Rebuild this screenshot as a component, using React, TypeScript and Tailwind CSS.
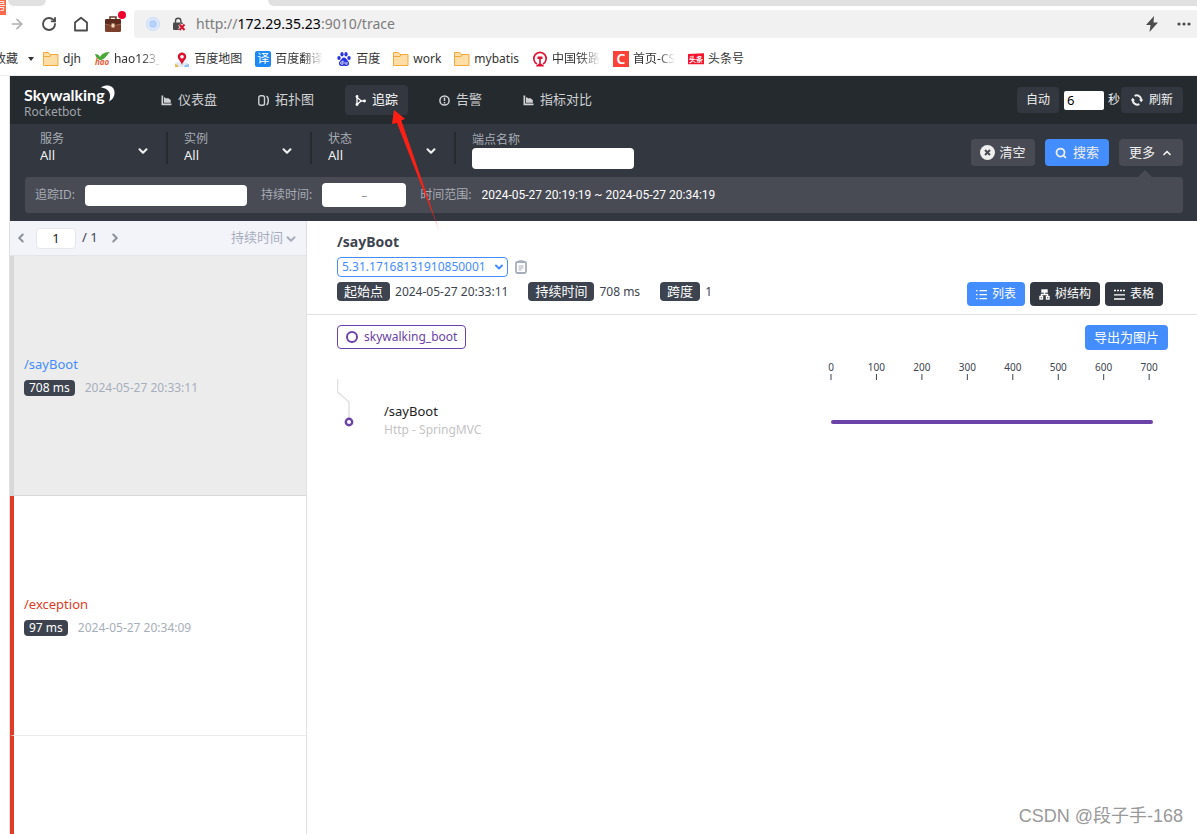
import type { ReactNode } from 'react';
import { ArrowRight, ChevronDown, ChevronLeft, ChevronRight, ChevronUp, RotateCw, Search } from 'lucide-react';

interface Trace {
  endpoint: string;
  duration: string;
  start: string;
  isError: boolean;
}

const traces: Trace[] = [
  { endpoint: '/sayBoot', duration: '708 ms', start: '2024-05-27 20:33:11', isError: false },
  { endpoint: '/exception', duration: '97 ms', start: '2024-05-27 20:34:09', isError: true },
];

const ticks = [0, 100, 200, 300, 400, 500, 600, 700];

/* ---------- Icons ---------- */

const FolderIcon = () => (
  <svg viewBox="0 0 16 16" className="size-4 shrink-0">
    <path d="M.5 14.500V1.500h5l1.500 2h8v11z" fill="#ffdda6" stroke="#f5a83c" />
    <path d="M1 5.500h6l1-2" fill="none" stroke="#f5a83c" />
  </svg>
);

const HaoIcon = () => (
  <svg viewBox="0 0 16 16" className="size-4 shrink-0">
    <path d="M1 3c3 0 4 1 5 3 2-4 6-5 10-5-3 2-3 6-9 8C4 9 2 7 1 3z" fill="#4aa83a" />
    <text x="1" y="14" fontSize="8" fontWeight="700" fontStyle="italic" fill="#e8603c">hao</text>
  </svg>
);

const MapPinIcon = () => (
  <svg viewBox="0 0 16 16" className="size-4 shrink-0">
    <path d="M1 12l4-1 3 2 4-2 3 2v3H1z" fill="#dfeaf5" />
    <path d="M1 13l3 1v2H1z" fill="#f0b44c" />
    <path d="M11 14l4-1v3h-5z" fill="#8fc3f2" />
    <path d="M8 1.500a4.200 4.200 0 0 1 4.200 4.200C12.200 8.500 9 10 8 14 7 10 3.800 8.500 3.800 5.700A4.200 4.200 0 0 1 8 1.500z" fill="#e2102f" />
    <circle cx="8" cy="5.700" r="1.800" fill="#fff" />
  </svg>
);

const TranslateIcon = () => (
  <span className="flex size-4 shrink-0 items-center justify-center rounded-xs bg-[#1e88f5] text-xs leading-4 text-white">译</span>
);

const PawIcon = () => (
  <svg viewBox="0 0 16 16" className="size-4 shrink-0" fill="#2932e1">
    <ellipse cx="3" cy="7" rx="1.700" ry="2.100" />
    <ellipse cx="6" cy="3.200" rx="1.600" ry="2.200" />
    <ellipse cx="10" cy="3.200" rx="1.600" ry="2.200" />
    <ellipse cx="13" cy="7" rx="1.700" ry="2.100" />
    <path d="M8 6.500c2 0 2.500 2 4 3.500 2 2 1 5-1.500 5-1 0-1.500-.300-2.500-.300s-1.500.300-2.500.300C3 15 2 12 4 10c1.500-1.500 2-3.500 4-3.500z" />
    <path d="M7 9.500v3.700H5.800a1.200 1.200 0 0 1 0-2.400H7M9 10.800v1.600q0 .800.900.800h1.100v-2.400" fill="none" stroke="#fff" strokeWidth=".8" />
  </svg>
);

const RailwayIcon = () => (
  <svg viewBox="0 0 16 16" className="size-4 shrink-0">
    <path d="M5 13A6.200 6.200 0 1 1 11 13" fill="none" stroke="#e0102f" strokeWidth="1.600" />
    <path d="M5.500 5.500h5v2.500H8.800v4.500l3 2v1H4.200v-1l3-2V8H5.500z" fill="#e0102f" />
  </svg>
);

const CsdnIcon = () => (
  <span className="flex size-4 shrink-0 items-center justify-center bg-[#fc4237] text-sm leading-4 font-semibold text-white">C</span>
);

const ToutiaoIcon = () => (
  <svg viewBox="0 0 16 16" className="size-4 shrink-0">
    <path d="M0 3l16-.700v11L0 13.300z" fill="#f5142d" />
    <text x="1" y="11" fontSize="7" fontWeight="700" fill="#fff">头条</text>
  </svg>
);

const BriefcaseIcon = () => (
  <svg viewBox="0 0 18 18" className="size-[18px]">
    <path d="M6 4V2h6v2" fill="none" stroke="#6e3524" strokeWidth="1.500" />
    <rect x="1" y="4" width="16" height="13" rx="1.500" fill="#7b3f2b" />
    <path d="M1 5.500Q1 4 2.500 4h13Q17 4 17 5.500V9l-8 2-8-2z" fill="#5d2a1d" />
    <path d="M1 9l8 2 8-2" fill="none" stroke="#b9795a" strokeWidth=".7" />
    <rect x="7.500" y="8.500" width="3" height="4" fill="#f0d9b8" />
  </svg>
);

const InsecureIcon = () => (
  <svg viewBox="0 0 14 14" className="size-3.5">
    <path d="M3.500 6V4a2.700 2.700 0 0 1 5.400 0v2" fill="none" stroke="#4a4a4a" strokeWidth="1.400" />
    <rect x="1" y="5.500" width="10" height="7.500" rx="1" fill="#4a4a4a" />
    <path d="M7.500 7.500l5 5.500M12.500 7.500l-5 5.500" stroke="#f1f1f1" strokeWidth="3.500" />
    <path d="M7.500 7.500l5 5.500M12.500 7.500l-5 5.500" stroke="#d9112c" strokeWidth="1.900" />
  </svg>
);

const ChartIcon = () => (
  <svg viewBox="0 0 11 11" className="size-[11px] shrink-0" fill="currentColor">
    <path d="M.5 .5h1.700v8H10.500v1.700H.5z" />
    <path d="M3 2l2.500 1.500 1.500-.5L9.800 5V7.700H3z" />
  </svg>
);

const TopologyIcon = () => (
  <svg viewBox="0 0 11 11" className="size-[11px] shrink-0" fill="none" stroke="currentColor" strokeWidth="1.400">
    <rect x=".8" y=".8" width="5.700" height="9.400" rx="1.800" />
    <path d="M8.500 1.200c1.600.800 1.800 2 1.800 4.300s-.200 3.500-1.800 4.300" />
  </svg>
);

const TraceIcon = () => (
  <svg viewBox="0 0 11 11" className="size-[11px] shrink-0" fill="none" stroke="currentColor" strokeWidth="1.300">
    <path d="M2 1.500v8M2 2.500l4.500 3.500h2.500M2 9.500l4-3.500" />
    <circle cx="2" cy="1.500" r=".8" fill="currentColor" />
    <circle cx="2" cy="9.500" r=".8" fill="currentColor" />
    <circle cx="9.500" cy="6" r=".8" fill="currentColor" />
  </svg>
);

const AlarmIcon = () => (
  <svg viewBox="0 0 11 11" className="size-[11px] shrink-0" fill="none" stroke="currentColor" strokeWidth="1.500">
    <circle cx="5.500" cy="5.500" r="4.600" />
    <path d="M5.500 2.500v3.500M5.500 7v1.400" />
  </svg>
);

const RefreshIcon = () => (
  <svg viewBox="0 0 12 12" className="size-3 shrink-0" fill="none" stroke="currentColor" strokeWidth="2">
    <path d="M3.600 1.900A4.600 4.600 0 0 1 10.300 6M8.400 10.100A4.600 4.600 0 0 1 1.700 6" />
    <path d="M8 5.500h4.400L10.200 8.300zM-.4 6.500H4L1.800 3.700z" fill="currentColor" stroke="none" />
  </svg>
);

const ClearIcon = () => (
  <svg viewBox="0 0 14 14" className="size-[15px] shrink-0">
    <circle cx="7" cy="7" r="7" fill="#efefef" />
    <path d="M4.700 4.700l4.600 4.600M9.300 4.700L4.700 9.300" stroke="#494b54" strokeWidth="1.900" />
  </svg>
);

const ListIcon = () => (
  <svg viewBox="0 0 11 11" className="size-[11px] shrink-0" stroke="currentColor" strokeWidth="1.200">
    <path d="M0 1.600h1.500M0 5.600h1.500M0 9.600h1.500M3.500 1.600H11M3.500 5.600H11M3.500 9.600H11" />
  </svg>
);

const TreeIcon = () => (
  <svg viewBox="0 0 11 11" className="size-[11px] shrink-0" fill="none" stroke="currentColor" strokeWidth="1.400">
    <rect x="3" y="1" width="5" height="2" fill="currentColor" />
    <path d="M5.500 3v2.500M2.500 7.500v-2h6v2" />
    <rect x="1" y="7.500" width="2.500" height="2.500" />
    <rect x="7.500" y="7.500" width="2.500" height="2.500" />
  </svg>
);

const TableIcon = () => (
  <svg viewBox="0 0 11 11" className="size-[11px] shrink-0" stroke="currentColor" strokeWidth="1.300">
    <path d="M0 1.500h11" strokeDasharray="2 1" />
    <path d="M0 5.800h11M0 10h11" />
  </svg>
);

const ClipboardIcon = () => (
  <svg viewBox="0 0 12 14" className="h-3.5 w-3" fill="none" stroke="#a7aebb">
    <rect x="1" y="2" width="10" height="11" rx="1.500" strokeWidth="1.800" />
    <path d="M3.500 1.500h5" strokeWidth="2.500" />
    <path d="M3.500 6h5M3.500 8h5M3.500 10h3" />
  </svg>
);

/* ---------- Browser chrome ---------- */

const bookmarks: { label: string; icon: ReactNode; faded?: boolean }[] = [
  { label: 'djh', icon: <FolderIcon /> },
  { label: 'hao123_', icon: <HaoIcon />, faded: true },
  { label: '百度地图', icon: <MapPinIcon /> },
  { label: '百度翻译', icon: <TranslateIcon />, faded: true },
  { label: '百度', icon: <PawIcon /> },
  { label: 'work', icon: <FolderIcon /> },
  { label: 'mybatis', icon: <FolderIcon /> },
  { label: '中国铁路', icon: <RailwayIcon />, faded: true },
  { label: '首页-CS', icon: <CsdnIcon />, faded: true },
  { label: '头条号', icon: <ToutiaoIcon /> },
];

function BrowserBar() {
  return (
    <div className="shrink-0 border-b border-[#ececec] bg-white">
      {/* Tab strip */}
      <div className="relative flex h-1.5 pl-2">
        <div className="w-[38px] rounded-b-md bg-[#e1e1e1]" />
        <div className="ml-[222px] flex-1 rounded-bl-md bg-[#e1e1e1]" />
        <span className="absolute top-0 left-0 flex h-[15px] w-1.5 justify-end overflow-hidden bg-[#f9694d] text-[10px] leading-3 text-white">号</span>
      </div>

      {/* Toolbar */}
      <div className="mt-1 flex h-7 items-center gap-4 pl-[9px] text-[#4c4c4c]">
        <button aria-label="前进"><ArrowRight className="size-4 text-[#b0b0b0]" strokeWidth={2.500} /></button>
        <button aria-label="重新加载"><RotateCw className="size-4" strokeWidth={2.800} /></button>
        <button aria-label="主页">
          <svg viewBox="0 0 16 16" className="size-4" fill="none" stroke="currentColor" strokeWidth="1.800">
            <path d="M2 14.500V6.500L8 1.800l6 4.700v8z" strokeLinejoin="round" />
          </svg>
        </button>
        <button aria-label="工具箱" className="relative -ml-px">
          <BriefcaseIcon />
          <span className="absolute -top-1 -right-1 size-2 rounded-full bg-[#f0002d]" />
        </button>
        <div className="-ml-1 flex h-7 flex-1 items-center rounded-l bg-[#f1f1f1] pr-1.5 pl-3">
          <span className="size-3.5 rounded-full border border-[#cfe0fb] bg-[#b5d1fb] ring-2 ring-[#e3edfb] ring-inset" />
          <span className="ml-3"><InsecureIcon /></span>
          <div role="textbox" aria-label="地址" className="ml-2.5 flex-1 text-sm leading-5 text-[#7c7c7c]">
            http://<span className="text-black">172.29.35.23</span>:9010/trace
          </div>
          <button aria-label="极速模式">
            <svg viewBox="0 0 14 16" className="h-4 w-3.5"><path d="M9 0L1 9h4.500L4.500 16 13 6.500H8.500z" fill="#4c4c4c" /></svg>
          </button>
          <button aria-label="更多" className="ml-[18px]">
            <svg viewBox="0 0 14 4" className="h-1 w-3.5" fill="#4c4c4c">
              <circle cx="2" cy="2" r="1.600" />
              <circle cx="7" cy="2" r="1.600" />
              <circle cx="12" cy="2" r="1.600" />
            </svg>
          </button>
        </div>
      </div>

      {/* Bookmarks */}
      <div className="flex h-[37px] items-center gap-[9px] pt-1 text-xs text-[#333]">
        <button className="flex items-center gap-2.5">
          <span className="flex w-[18px] justify-end overflow-hidden whitespace-nowrap">收藏</span>
          <svg viewBox="0 0 6 4" className="h-1 w-1.5"><path d="M0 0h6L3 4z" fill="#333" /></svg>
        </button>
        <div className="flex items-center gap-[13px]">
          {bookmarks.map((b) => (
            <a key={b.label} href="#" className="flex items-center gap-1 whitespace-nowrap">
              {b.icon}
              <span className={b.faded ? 'mask-r-from-60% mask-r-to-100%' : ''}>{b.label}</span>
            </a>
          ))}
        </div>
      </div>
    </div>
  );
}

/* ---------- Rocketbot header ---------- */

const navItems = [
  { label: '仪表盘', icon: <ChartIcon /> },
  { label: '拓扑图', icon: <TopologyIcon /> },
  { label: '追踪', icon: <TraceIcon />, active: true },
  { label: '告警', icon: <AlarmIcon /> },
  { label: '指标对比', icon: <ChartIcon /> },
];

function Header() {
  return (
    <header className="flex h-12 items-center bg-[#252a2f] px-3.5 text-xs text-[#efefef]">
      <div className="w-[127px] pt-1">
        <div className="flex text-white">
          <span className="font-['Lato',sans-serif] text-base leading-5 font-bold">Skywalking</span>
          <svg viewBox="0 0 14 17" className="-ml-1 h-[17px] w-3.5">
            <path d="M0 2.500C6-1.500 14 1 13.500 8c0 4-2.500 7-5.500 8.500C10.500 10 9 3.500 0 2.500z" fill="#fff" />
          </svg>
        </div>
        <div className="text-xs leading-3.5 text-[#a0a5ab]">Rocketbot</div>
      </div>
      <nav className="flex gap-[21px]">
        {navItems.map((item) => (
          <a
            key={item.label}
            href="#"
            className={`flex h-[30px] items-center gap-1.5 rounded px-2.5 text-[13px] ${
              item.active ? 'bg-[#333840] text-white' : 'text-[#cfd1d3]'
            }`}
          >
            {item.icon}
            {item.label}
          </a>
        ))}
      </nav>
      <div className="ml-auto flex items-center">
        <button className="h-[26px] rounded bg-[#333840] px-[9px]">自动</button>
        <label className="ml-[5px] flex items-center gap-1">
          <input defaultValue="6" aria-label="刷新间隔" className="h-[19px] w-10 rounded-xs bg-white px-[3px] text-[13px] text-black" />
          秒
        </label>
        <button className="ml-px flex h-[26px] items-center gap-1.5 rounded bg-[#333840] px-2.5">
          <RefreshIcon />
          刷新
        </button>
      </div>
    </header>
  );
}

function FilterSelect({ id, label }: { id: string; label: string }) {
  return (
    <div className="relative h-8 w-36 border-r-2 border-[#252a2f] pl-4">
      <label htmlFor={id} className="block text-xs leading-3.5 text-[#a7acb5]">{label}</label>
      <select id={id} className="block w-full appearance-none bg-transparent text-[13px] leading-[18px] text-[#efefef]">
        <option>All</option>
      </select>
      <ChevronDown className="pointer-events-none absolute top-3 right-4 size-3.5 text-[#efefef]" strokeWidth={3.500} />
    </div>
  );
}

function Filters() {
  return (
    <section className="bg-[#333840] px-3.5 pb-2 text-xs text-[#a7acb5]">
      <div className="flex h-[53px] items-start pt-2">
        <FilterSelect id="service" label="服务" />
        <FilterSelect id="instance" label="实例" />
        <FilterSelect id="status" label="状态" />
        <div className="pl-4">
          <label htmlFor="endpoint" className="block leading-4">端点名称</label>
          <input id="endpoint" className="block h-[21px] w-[162px] rounded-sm bg-white px-1 text-black" />
        </div>
        <div className="mt-[7px] ml-auto flex gap-2.5 text-[13px] text-[#efefef]">
          <button className="flex h-[27px] w-16 items-center justify-center gap-1 rounded bg-[#494b54]">
            <ClearIcon />
            清空
          </button>
          <button className="flex h-[27px] w-16 items-center justify-center gap-1.5 rounded bg-[#448dfe]">
            <Search className="size-3" strokeWidth={3.500} />
            搜索
          </button>
          <button className="relative flex h-[27px] w-16 items-center justify-center gap-1.5 rounded bg-[#494b54]">
            更多
            <ChevronUp className="size-3" strokeWidth={3.500} />
            <svg viewBox="0 0 16 8" className="absolute top-[31px] left-[18px] h-2 w-4"><path d="M0 8l8-8 8 8z" fill="#494b54" /></svg>
          </button>
        </div>
      </div>
      <div className="ml-px flex h-9 items-center gap-2.5 rounded bg-[#494b54] pl-2.5">
        <label htmlFor="trace-id">追踪ID:</label>
        <input id="trace-id" className="h-[21px] w-[162px] rounded-sm bg-white px-1 text-black" />
        <label htmlFor="duration" className="ml-1">持续时间:</label>
        <input id="duration" placeholder="–" className="h-6 w-[84px] rounded-sm bg-white text-center placeholder:text-[#999]" />
        <span className="ml-1">时间范围:</span>
        <span className="font-['Roboto','Noto_Sans_CJK_SC',sans-serif] text-white">2024-05-27 20:19:19 ~ 2024-05-27 20:34:19</span>
      </div>
    </section>
  );
}

/* ---------- Trace list ---------- */

function TraceList() {
  return (
    <aside className="w-[297px] shrink-0 overflow-hidden border-r border-[#e1e1e1]">
      <div className="flex h-[35px] items-center border-b border-[#e3e4e8] bg-[#f3f3fa] pr-2 pl-1 text-[13px] text-[#a7aebb]">
        <button aria-label="上一页"><ChevronLeft className="size-3.5 text-[#8d939c]" strokeWidth={3.500} /></button>
        <input aria-label="页码" defaultValue="1" className="ml-2 h-[21px] w-10 rounded-sm border border-[#e6e6ee] bg-white text-center text-[#222]" />
        <span className="ml-1.5 text-[#3d444f]">/ 1</span>
        <button aria-label="下一页" className="ml-2.5"><ChevronRight className="size-3.5 text-[#8d939c]" strokeWidth={3.500} /></button>
        <label className="relative ml-auto">
          <select aria-label="排序" className="w-[67px] appearance-none bg-transparent">
            <option>持续时间</option>
          </select>
          <ChevronDown className="pointer-events-none absolute top-1 right-0 size-3.5" strokeWidth={3.500} />
        </label>
      </div>
      {traces.map((t) => (
        <a
          key={t.endpoint}
          href="#"
          className={`flex h-60 flex-col justify-center border-b border-l-4 pb-0.5 pl-2.5 ${
            t.isError ? 'border-b-[#ececec] border-l-[#e03b26]' : 'border-b-[#d8d8d8] border-l-[#d8d8d8] bg-[#ececec]'
          }`}
        >
          <span className={`text-[13px] leading-5 ${t.isError ? 'text-[#e03b26]' : 'text-[#448dfe]'}`}>{t.endpoint}</span>
          <span className="mt-1.5 flex items-center gap-2.5 text-xs leading-4">
            <span className="rounded bg-[#3d444f] px-[5px] text-white">{t.duration}</span>
            <span className="text-[#a7aebb]">{t.start}</span>
          </span>
        </a>
      ))}
      <div className="h-60 border-l-4 border-[#e03b26]" />
    </aside>
  );
}

/* ---------- Trace detail ---------- */

function InfoItem({ label, value }: { label: string; value: string }) {
  return (
    <div className="flex items-center gap-[5px]">
      <span className="h-[19px] rounded bg-[#3d444f] px-[7px] text-[13px] leading-[19px] text-white">{label}</span>
      <span>{value}</span>
    </div>
  );
}

function TraceDetail() {
  return (
    <main className="min-w-0 flex-1 text-xs text-[#3d444f]">
      <div className="border-b border-[#e1e1e1] pt-[11px] pr-[34px] pb-2 pl-[30px]">
        <h1 className="text-sm leading-5 font-bold">/sayBoot</h1>
        <div className="mt-[5px] flex items-center gap-[7px]">
          <div className="relative text-[#448dfe]">
            <select aria-label="追踪ID" className="block h-5 w-[171px] appearance-none rounded-sm border border-[#448dfe] bg-white pl-1 leading-4">
              <option>5.31.17168131910850001</option>
            </select>
            <ChevronDown className="pointer-events-none absolute top-1 right-[3px] size-3" strokeWidth={4} />
          </div>
          <button aria-label="复制"><ClipboardIcon /></button>
        </div>
        <div className="mt-[5px] flex items-start justify-between">
          <div className="flex gap-5">
            <InfoItem label="起始点" value="2024-05-27 20:33:11" />
            <InfoItem label="持续时间" value="708 ms" />
            <InfoItem label="跨度" value="1" />
          </div>
          <div className="flex gap-[5px] text-white">
            <button className="flex h-6 items-center gap-[5px] rounded-sm bg-[#448dfe] px-[9px]"><ListIcon />列表</button>
            <button className="flex h-6 items-center gap-[5px] rounded-sm bg-[#333840] px-[9px]"><TreeIcon />树结构</button>
            <button className="flex h-6 items-center gap-[5px] rounded-sm bg-[#333840] px-[9px]"><TableIcon />表格</button>
          </div>
        </div>
      </div>

      <div className="pt-2.5 pr-[29px] pl-[30px]">
        <div className="flex items-start justify-between">
          <span className="flex h-6 items-center gap-1.5 rounded-sm border border-[#6b42a8] px-2 text-[#6b42a8]">
            <span className="size-3 rounded-full border-2 border-[#6b42a8]" />
            skywalking_boot
          </span>
          <button className="h-[25px] rounded-sm bg-[#448dfe] px-[9px] text-[13px] text-white">导出为图片</button>
        </div>

        <div className="mt-1.5 flex justify-between">
          <div className="flex pt-[23px]">
            <svg viewBox="0 0 20 60" className="h-[60px] w-5" fill="none">
              <path d="M.5 0v13L12 23v16" stroke="#e1e1e1" strokeWidth="1.500" />
              <circle cx="12" cy="43" r="3.200" stroke="#6b42a8" strokeWidth="2.400" />
            </svg>
            <div className="pt-[22px] pl-[27px]">
              <div className="text-[13px] leading-5 text-[#222]">/sayBoot</div>
              <div className="text-xs leading-[18px] text-[#c4c4c4]">Http - SpringMVC</div>
            </div>
          </div>
          <svg viewBox="0 0 348 84" className="h-[84px] w-[348px]">
            {ticks.map((t) => (
              <g key={t} transform={`translate(${11 + t * 0.4545} 0)`}>
                <text y="15" textAnchor="middle" fontSize="10" fill="#3d444f">{t}</text>
                <path d="M0 18v6" stroke="#3d444f" />
              </g>
            ))}
            <path d="M13 66h318" stroke="#6b42a8" strokeWidth="4" strokeLinecap="round" />
          </svg>
        </div>
      </div>
    </main>
  );
}

export default function App() {
  return (
    <div className="relative flex h-screen flex-col overflow-hidden bg-white font-['Noto_Sans','Noto_Sans_CJK_SC',sans-serif]">
      <BrowserBar />
      <div className="ml-[9px] flex min-h-0 flex-1 flex-col border-l border-[#e1e1e1]">
        <Header />
        <Filters />
        <div className="flex min-h-0 flex-1">
          <TraceList />
          <TraceDetail />
        </div>
      </div>

      {/* Annotation arrow */}
      <svg viewBox="0 0 50 124" className="pointer-events-none absolute top-[110px] left-[391px] h-[124px] w-[50px]">
        <defs>
          <linearGradient id="arrow" x1="0" y1="0" x2="0" y2="1">
            <stop offset=".8" stopColor="#ff1f14" />
            <stop offset="1" stopColor="#ff1f14" stopOpacity=".3" />
          </linearGradient>
        </defs>
        <path d="M3 0L14 8.700 10.300 10.500 48.700 122 6 13 1 14z" fill="url(#arrow)" />
      </svg>

      <span className="absolute right-3.5 bottom-1.5 font-['Liberation_Sans','Noto_Sans_CJK_SC',sans-serif] text-lg leading-6 text-[#999] [text-shadow:1px_1px_0_#fff]">
        CSDN @段子手-168
      </span>
    </div>
  );
}
